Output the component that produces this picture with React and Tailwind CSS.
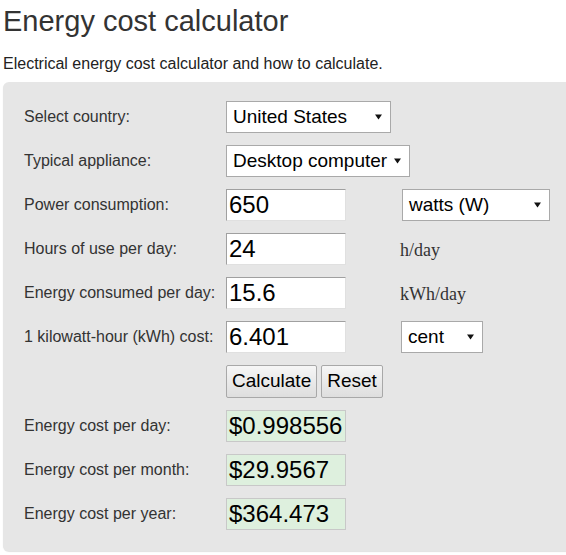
import React from 'react';

const Caret = () => (
    <svg width="7" height="6" viewBox="0 0 7 6" className="shrink-0">
        <path d="M0 0.5 L7 0.5 L3.5 5.5 Z" fill="#111" />
    </svg>
);

const Select = ({ value, width }) => (
    <div className={`${width} h-[32px] bg-white border border-[#a9a9a9] flex items-center justify-between pl-[6px] pr-[8px] text-[19px] text-black`}>
        <span>{value}</span>
        <Caret />
    </div>
);

const Field = ({ value }) => (
    <div className="w-[120px] h-[32px] bg-white border-t border-l border-[#a0a0a0] border-r border-r-[#e0e0e0] border-b border-b-[#e0e0e0] flex items-center pl-[2px] text-[24px] text-black">
        {value}
    </div>
);

const Result = ({ value }) => (
    <div className="w-[120px] h-[32px] bg-[#def0de] border border-[#c8c8c8] flex items-center pl-[2px] text-[24px] text-black">
        {value}
    </div>
);

const Row = ({ label, children }) => (
    <div className="flex items-center h-[32px]">
        <div className="w-[202px] text-[16px] text-[#333]">{label}</div>
        {children}
    </div>
);

const Unit = ({ children }) => (
    <span className="ml-[54px] mt-[3px] text-[18px] text-[#333] font-['Liberation_Serif',serif]">{children}</span>
);

export default function App() {
    return (
        <div className="w-[566px] h-[555px] bg-white overflow-hidden font-['Liberation_Sans',Arial,sans-serif]">
            <h1 className="pl-[3px] pt-[3px] text-[29px] leading-[36px] text-[#333]">Energy cost calculator</h1>
            <p className="pl-[3px] mt-[15px] text-[16px] leading-[20px] text-[#222]">
                Electrical energy cost calculator and how to calculate.
            </p>

            <div className="ml-[3px] mt-[8px] w-[580px] bg-[#e6e6e6] rounded-[6px] shadow-[0_1px_1px_rgba(0,0,0,0.12)] pl-[21px] pt-[19px] pb-[21px] flex flex-col gap-[12px]">
                <Row label="Select country:">
                    <Select value="United States" width="w-[165px]" />
                </Row>
                <Row label="Typical appliance:">
                    <Select value="Desktop computer" width="w-[184px]" />
                </Row>
                <Row label="Power consumption:">
                    <Field value="650" />
                    <div className="ml-[56px]">
                        <Select value="watts (W)" width="w-[148px]" />
                    </div>
                </Row>
                <Row label="Hours of use per day:">
                    <Field value="24" />
                    <Unit>h/day</Unit>
                </Row>
                <Row label="Energy consumed per day:">
                    <Field value="15.6" />
                    <Unit>kWh/day</Unit>
                </Row>
                <Row label="1 kilowatt-hour (kWh) cost:">
                    <Field value="6.401" />
                    <div className="ml-[55px]">
                        <Select value="cent" width="w-[82px]" />
                    </div>
                </Row>
                <div className="flex items-center h-[33px] pl-[202px] gap-[4px]">
                    {['Calculate', 'Reset'].map((b) => (
                        <button
                            key={b}
                            className="h-[33px] px-[5px] text-[19px] text-black border border-[#a8a8a8] rounded-[2px] bg-gradient-to-b from-[#f6f6f6] to-[#dedede]"
                        >
                            {b}
                        </button>
                    ))}
                </div>
                <Row label="Energy cost per day:">
                    <Result value="$0.998556" />
                </Row>
                <Row label="Energy cost per month:">
                    <Result value="$29.9567" />
                </Row>
                <Row label="Energy cost per year:">
                    <Result value="$364.473" />
                </Row>
            </div>
        </div>
    );
}
